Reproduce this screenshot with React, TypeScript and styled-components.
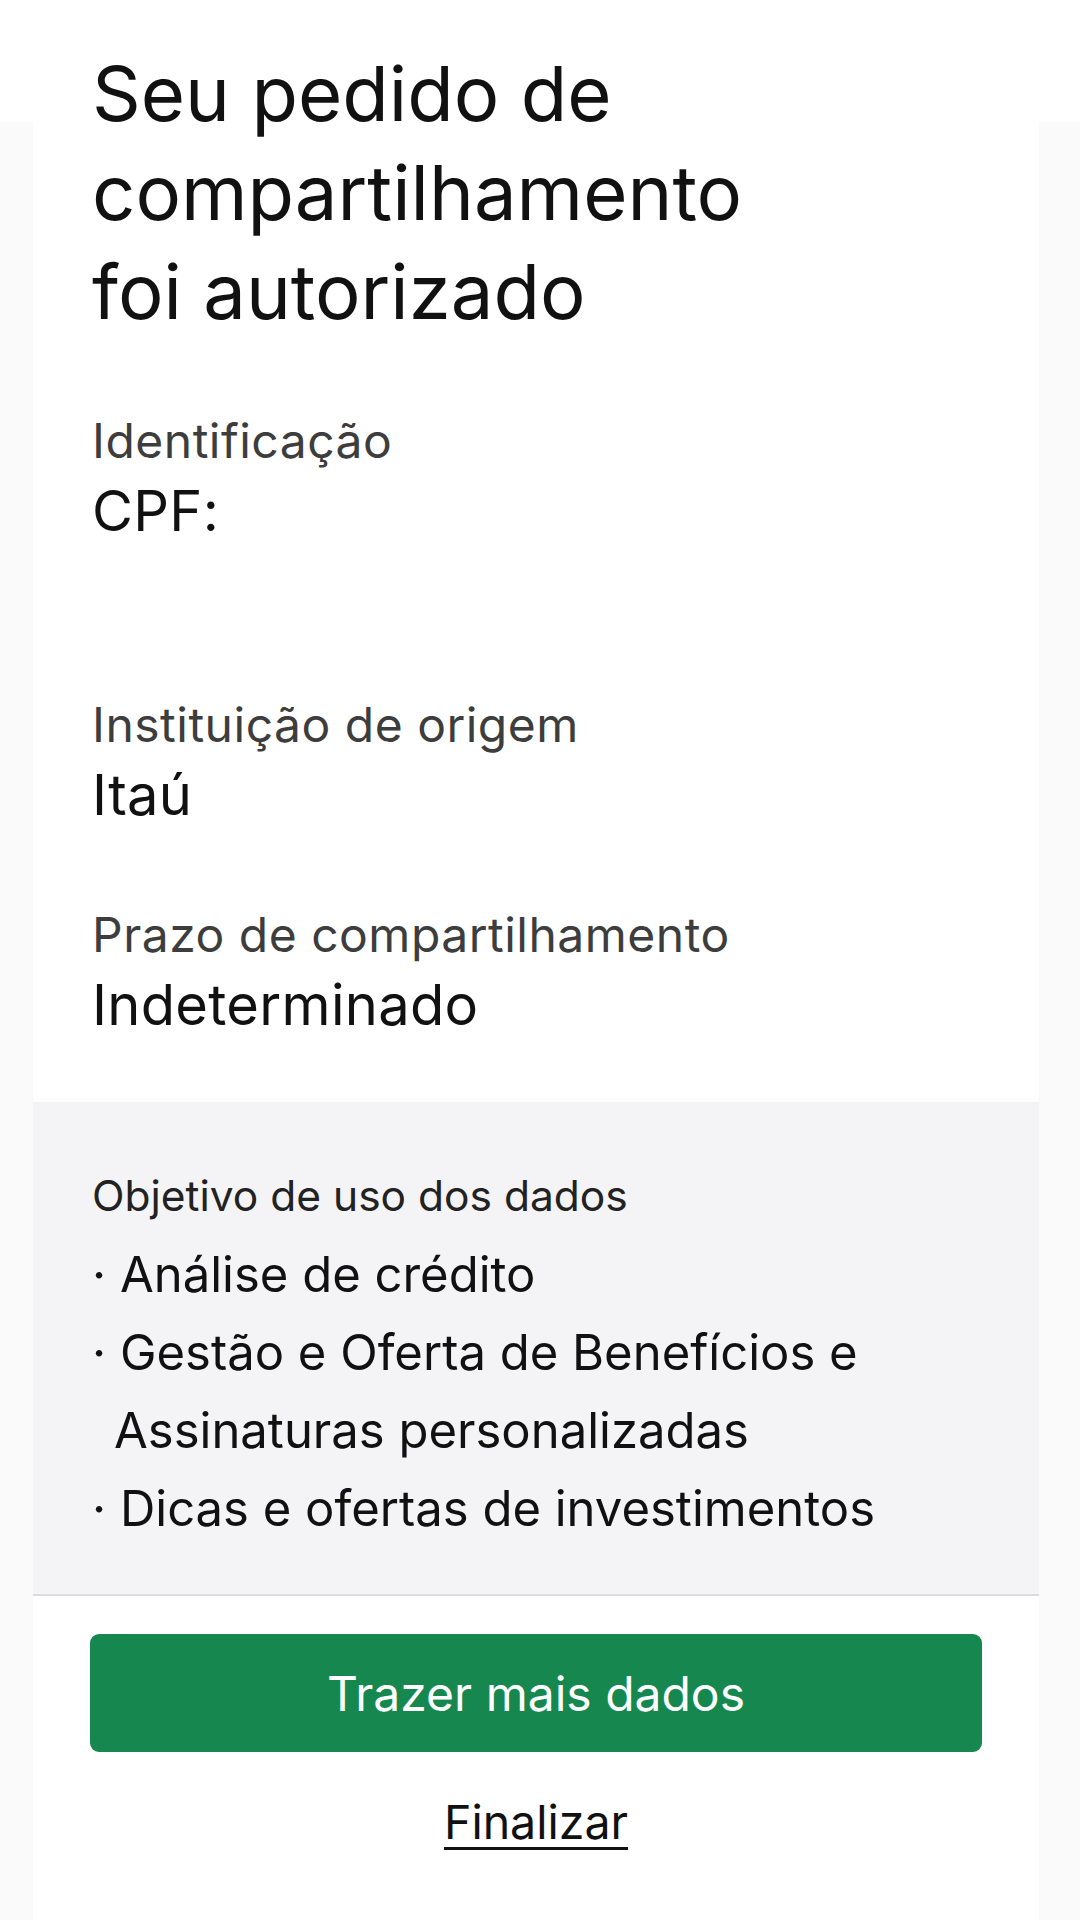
import * as React from 'react';
import styled, { createGlobalStyle } from 'styled-components';

const GlobalStyle = createGlobalStyle`
  html, body {
    margin: 0;
    padding: 0;
  }
  body {
    width: 1080px;
    min-height: 1920px;
    background: linear-gradient(to bottom, #ffffff 0, #ffffff 122px, #fafafa 122px);
    font-family: Inter, 'Noto Sans', 'Liberation Sans', sans-serif;
    color: #111111;
    -webkit-font-smoothing: antialiased;
  }
`;

const Card = styled.div`
  margin-left: 33px;
  width: 1006px;
  min-height: 1920px;
  background: #ffffff;
  display: flex;
  flex-direction: column;
`;

const Summary = styled.section`
  display: flex;
  flex-direction: column;
  gap: 70px;
  padding: 44px 57px 57px 59px;
`;

const Title = styled.h1`
  margin: 0;
  font-size: 76px;
  line-height: 99px;
  font-weight: 400;
  color: #111111;
`;

const Field = styled.div`
  display: flex;
  flex-direction: column;
`;

const Label = styled.span`
  font-size: 48px;
  line-height: 60px;
  letter-spacing: 0.5px;
  color: #3d3d3d;
`;

const Value = styled.span`
  font-size: 56px;
  line-height: 80px;
  letter-spacing: 0.3px;
  color: #111111;
`;

const Redacted = styled.span`
  display: block;
  height: 74px;
`;

const Purpose = styled.section`
  background: #f4f4f6;
  border-bottom: 2px solid #dcdcdf;
  padding: 66px 57px 46px 59px;
  display: flex;
  flex-direction: column;
`;

const PurposeTitle = styled.h2`
  margin: 0 0 12px;
  font-size: 42.5px;
  line-height: 56px;
  font-weight: 400;
  color: #222222;
`;

const PurposeList = styled.ul`
  margin: 0;
  padding: 0;
  list-style: none;
`;

const PurposeItem = styled.li`
  font-size: 49px;
  line-height: 78px;
  color: #111111;
  padding-left: 22px;
  text-indent: -22px;
`;

const Actions = styled.div`
  display: flex;
  flex-direction: column;
  align-items: center;
  padding: 38px 57px 0;
  gap: 40px;
`;

const PrimaryButton = styled.button`
  width: 100%;
  height: 118px;
  border: none;
  border-radius: 9px;
  background: #16884f;
  color: #ffffff;
  font-family: inherit;
  font-size: 48px;
  cursor: pointer;
`;

const LinkButton = styled.button`
  border: none;
  background: none;
  padding: 0;
  font-family: inherit;
  font-size: 46.5px;
  line-height: 60px;
  color: #111111;
  text-decoration: underline;
  text-underline-offset: 8px;
  text-decoration-thickness: 3px;
  cursor: pointer;
`;

const purposes = [
  'Análise de crédito',
  'Gestão e Oferta de Benefícios e Assinaturas personalizadas',
  'Dicas e ofertas de investimentos',
];

export default function App(): React.ReactElement {
  return (
    <>
      <GlobalStyle />
      <Card>
        <Summary>
          <Title>
            Seu pedido de
            <br />
            compartilhamento
            <br />
            foi autorizado
          </Title>
          <Field>
            <Label>Identificação</Label>
            <Value>CPF:</Value>
            <Redacted />
          </Field>
          <Field>
            <Label>Instituição de origem</Label>
            <Value>Itaú</Value>
          </Field>
          <Field>
            <Label>Prazo de compartilhamento</Label>
            <Value>Indeterminado</Value>
          </Field>
        </Summary>
        <Purpose>
          <PurposeTitle>Objetivo de uso dos dados</PurposeTitle>
          <PurposeList>
            {purposes.map(p => (
              <PurposeItem key={p}>· {p}</PurposeItem>
            ))}
          </PurposeList>
        </Purpose>
        <Actions>
          <PrimaryButton>Trazer mais dados</PrimaryButton>
          <LinkButton>Finalizar</LinkButton>
        </Actions>
      </Card>
    </>
  );
}
